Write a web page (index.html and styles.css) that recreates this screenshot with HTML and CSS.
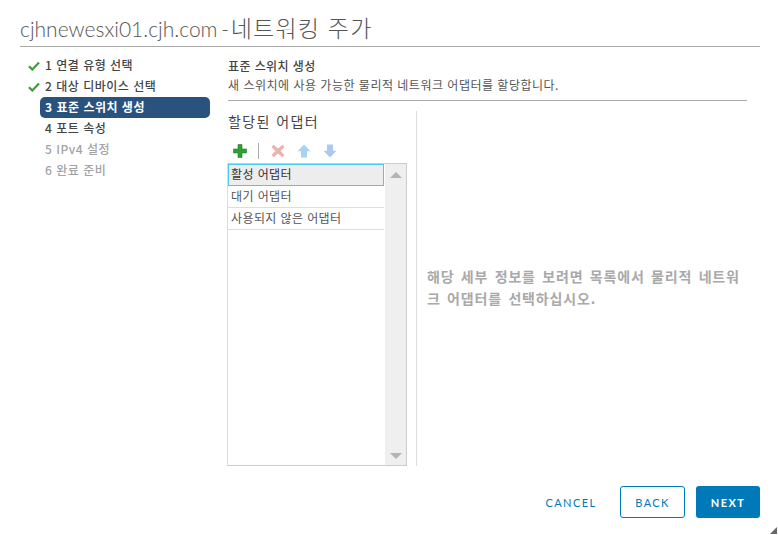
FILE: index.html
```html
<!DOCTYPE html>
<html lang="ko">
<head>
<meta charset="utf-8">
<title>네트워킹 추가</title>
<link rel="stylesheet" href="styles.css">
</head>
<body>
<div class="dialog">
  <h1 class="title">cjhnewesxi01.cjh.com - <span class="title-ko">네트워킹 주가</span></h1>
  <div class="main">
    <nav class="steps">
      <div class="step done"><svg class="check" viewBox="0 0 12 10"><path d="M1 5.200 4.300 8.500 11 1.600" fill="none" stroke="#3f9c35" stroke-width="2.200"/></svg>1 연결 유형 선택</div>
      <div class="step done"><svg class="check" viewBox="0 0 12 10"><path d="M1 5.200 4.300 8.500 11 1.600" fill="none" stroke="#3f9c35" stroke-width="2.200"/></svg>2 대상 디바이스 선택</div>
      <div class="step active">3 표준 스위치 생성</div>
      <div class="step">4 포트 속성</div>
      <div class="step off">5 IPv4 설정</div>
      <div class="step off">6 완료 준비</div>
    </nav>
    <section class="content">
      <header class="head">
        <div class="head-title">표준 스위치 생성</div>
        <div class="head-sub">새 스위치에 사용 가능한 물리적 네트워크 어댑터를 할당합니다.</div>
      </header>
      <div class="split">
        <div class="left">
          <div class="section-title">할당된 어댑터</div>
          <div class="toolbar">
            <svg class="tool" viewBox="0 0 14 14"><path d="M5 .5h4v4.500h4.500v4H9v4.500H5V9H.5V5H5z" fill="#2f9e33" stroke="#1f7f26" stroke-width=".6"/></svg>
            <span class="sep"></span>
            <svg class="tool" viewBox="0 0 14 14"><path d="M2.500 .8 7 4.400 11.500 .8 13.500 3 9.500 7l4 4-2 2.200L7 9.600l-4.500 3.600-2-2.200 4-4-4-4z" fill="#eeb1ae"/></svg>
            <svg class="tool" viewBox="0 0 14 14"><path d="M7 .5l6.500 6.700H10V13.500H4V7.200H.5z" fill="#a9d2f2"/></svg>
            <svg class="tool" viewBox="0 0 14 14"><path d="M7 13.500 .5 6.800H4V.5h6v6.300h3.500z" fill="#a9c9f0"/></svg>
          </div>
          <div class="listbox">
            <ul class="items">
              <li class="item selected">활성 어댑터</li>
              <li class="item">대기 어댑터</li>
              <li class="item">사용되지 않은 어댑터</li>
            </ul>
            <div class="scroll"><span class="arrow up"></span><span class="arrow down"></span></div>
          </div>
        </div>
        <div class="detail"><p class="hint">해당 세부 정보를 보려면 목록에서 물리적 네트워크 어댑터를 선택하십시오.</p></div>
      </div>
    </section>
  </div>
  <footer class="footer">
    <button class="btn link">CANCEL</button>
    <button class="btn outline">BACK</button>
    <button class="btn primary">NEXT</button>
  </footer>
  <svg class="grip" viewBox="0 0 7 7"><path d="M7 0v7H0z" fill="#666"/></svg>
</div>
</body>
</html>
```
FILE: styles.css
```css
* { box-sizing: border-box; }
html, body { margin: 0; height: 100%; background: #fff; }
body { font-family: "Noto Sans CJK KR", "Liberation Sans", sans-serif; color: #333; overflow: hidden; }
.dialog { position: relative; width: 778px; height: 535px; padding: 0 18px 0 20px; display: flex; flex-direction: column; }
.title { margin: 0; height: 47px; padding-top: 11px; font-family: "Lato", "Noto Sans CJK KR", sans-serif; font-weight: 300; font-size: 21px; word-spacing: -2px; line-height: 33px; color: #565656; border-bottom: 1px solid #a8a8a8; white-space: nowrap; }
.title-ko { font-family: "Noto Sans CJK KR", sans-serif; font-weight: 300; font-size: 23px; letter-spacing: 1.200px; word-spacing: 0; margin-left: -2px; }
.main { display: flex; height: 419px; }
.steps { width: 190px; padding-top: 8px; flex: none; }
.step { height: 21px; line-height: 20px; padding-left: 25px; font-size: 12px; letter-spacing: .5px; font-weight: 500; color: #444; position: relative; white-space: nowrap; }
.step.active { background: #29527f; color: #fff; border-radius: 5px; margin-left: 20px; padding-left: 5px; font-weight: 700; }
.step.off { color: #a3a3a3; }
.check { position: absolute; left: 8px; top: 6px; width: 12px; height: 10px; }
.content { margin-left: 18px; flex: 1; display: flex; flex-direction: column; }
.head { height: 55px; padding-top: 10px; border-bottom: 1px solid #a8a8a8; margin-right: 13px; }
.head-title { font-size: 12px; letter-spacing: .4px; line-height: 18px; font-weight: 500; color: #444; }
.head-sub { font-size: 12px; letter-spacing: .5px; line-height: 20px; color: #555; }
.split { display: flex; flex: 1; padding-top: 10px; }
.left { width: 189px; border-right: 1px solid #ddd; flex: none; height: 355px; }
.section-title { font-size: 14px; letter-spacing: 1.400px; line-height: 20px; color: #444; }
.toolbar { display: flex; align-items: center; height: 20px; margin-top: 10px; padding-left: 5px; }
.tool { width: 14px; height: 14px; margin-right: 12px; }
.tool:first-child { margin-right: 0; }
.sep { width: 1px; height: 16px; background: #aaa; margin: 0 12px 0 11px; }
.listbox { display: flex; width: 180px; height: 303px; margin: 2px 0 0 -1px; border: 1px solid #ccc; border-left-color: #ddd; }
.items { list-style: none; margin: 0; padding: 0; width: 156px; }
.item { height: 22px; line-height: 20px; padding-left: 3px; font-size: 12px; letter-spacing: .4px; color: #555; border-bottom: 1px solid #ddd; white-space: nowrap; }
.item.selected { background: #ededed; border: 1px solid #49c8f0; padding-left: 2px; color: #333; line-height: 18px; }
.scroll { flex: 1; margin-left: 1px; background: #efefef; display: flex; flex-direction: column; justify-content: space-between; align-items: center; padding: 8px 0 6px; }
.arrow { width: 0; height: 0; border-left: 6px solid transparent; border-right: 6px solid transparent; }
.arrow.up { border-bottom: 6px solid #b3b3b3; }
.arrow.down { border-top: 6px solid #b3b3b3; }
.detail { flex: 1; display: flex; align-items: center; padding: 0 10px 0 10px; height: 355px; }
.hint { margin: -3px 0 0; font-size: 14px; letter-spacing: .85px; word-spacing: 1.600px; line-height: 22px; font-weight: 700; color: #a9a9a9; word-break: break-all; }
.footer { display: flex; justify-content: flex-end; align-items: center; height: 32px; margin-top: 20px; }
.btn { height: 32px; font-family: "Lato", "Liberation Sans", sans-serif; font-size: 11px; letter-spacing: 1.400px; border-radius: 3px; padding: 0; background: none; border: 1px solid transparent; }
.link { width: 76px; color: #0079b8; margin-right: 11px; }
.outline { width: 65px; color: #0079b8; border-color: #0079b8; background: #fff; margin-right: 11px; }
.primary { width: 64px; background: #0079b8; color: #fff; font-weight: 700; }
.grip { position: absolute; right: 1px; bottom: 1px; width: 7px; height: 7px; }
```
